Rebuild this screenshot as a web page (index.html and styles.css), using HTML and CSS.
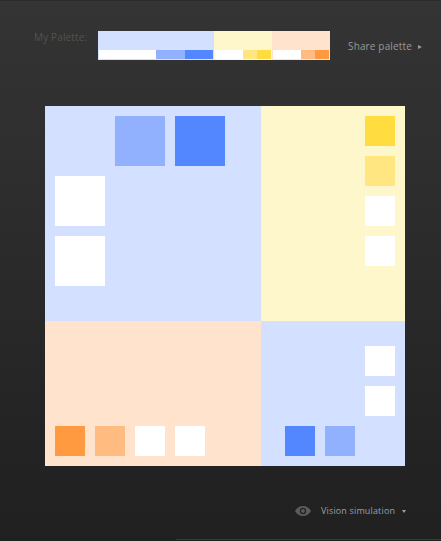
FILE: index.html
```html
<!DOCTYPE html>
<html lang="en">
<head>
    <meta charset="UTF-8">
    <meta name="viewport" content="width=device-width, initial-scale=1.0">
    <title>My Palette</title>
    <link rel="stylesheet" href="styles.css">
</head>
<body>

    <div class="app">
        <header class="top">
            <span class="palette-label">My Palette:</span>
            <div class="palette">
                <div class="swatch swatch-blue">
                    <div class="tones">
                        <i class="tone t-white t-half"></i>
                        <i class="tone t-blue-mid"></i>
                        <i class="tone t-blue"></i>
                    </div>
                </div>
                <div class="swatch swatch-yellow">
                    <div class="tones">
                        <i class="tone t-white t-half"></i>
                        <i class="tone t-yellow-mid"></i>
                        <i class="tone t-yellow"></i>
                    </div>
                </div>
                <div class="swatch swatch-orange">
                    <div class="tones">
                        <i class="tone t-white t-half"></i>
                        <i class="tone t-orange-mid"></i>
                        <i class="tone t-orange"></i>
                    </div>
                </div>
            </div>
            <a class="share">Share palette <span class="arrow arrow-right"></span></a>
        </header>

        <!-- Preview board -->
        <main class="board">
            <section class="area area-tl">
                <i class="sq big t-blue-mid c2 r1"></i>
                <i class="sq big t-blue c3 r1"></i>
                <i class="sq big t-white c1 r2"></i>
                <i class="sq big t-white c1 r3"></i>
            </section>
            <section class="area area-tr">
                <i class="sq t-yellow"></i>
                <i class="sq t-yellow-mid"></i>
                <i class="sq t-white"></i>
                <i class="sq t-white"></i>
            </section>
            <section class="area area-bl">
                <i class="sq t-orange"></i>
                <i class="sq t-orange-mid"></i>
                <i class="sq t-white"></i>
                <i class="sq t-white"></i>
            </section>
            <section class="area area-br">
                <i class="sq t-white c3 r1"></i>
                <i class="sq t-white c3 r2"></i>
                <i class="sq t-blue c1 r3"></i>
                <i class="sq t-blue-mid c2 r3"></i>
            </section>
        </main>

        <footer class="bottom">
            <svg class="eye" width="16" height="10" viewBox="0 0 16 10">
                <path fill-rule="evenodd" fill="#5c5c5c" d="M0 5C2 1.8 4.8 0 8 0S14 1.8 16 5C14 8.2 11.2 10 8 10S2 8.2 0 5ZM8 1.8A3.2 3.2 0 1 0 8 8.2A3.2 3.2 0 1 0 8 1.8Z"/>
                <circle cx="8" cy="5" r="1.9" fill="#5c5c5c"/>
            </svg>
            <a class="vision">Vision simulation <span class="arrow arrow-down"></span></a>
        </footer>
        <div class="edge"></div>
    </div>

</body>
</html>
```

FILE: styles.css
```css
* {
    box-sizing: border-box;
}

body {
    margin: 0;
    font-family: "Open Sans", sans-serif;
    background-color: #2a2a2a;
}

.app {
    width: 441px;
    height: 541px;
    background: linear-gradient(#343434, #202020);
    border-top: 1px solid #2c2c2c;
    display: flex;
    flex-direction: column;
}

/* Barra de cima */
.top {
    height: 105px;
    padding: 29px 0 0 34px;
    display: flex;
    align-items: flex-start;
}

.palette-label {
    width: 64px;
    font-size: 10px;
    line-height: 14px;
    letter-spacing: 0.15px;
    color: #525252;
}

.palette {
    width: 232px;
    height: 29px;
    margin-top: 1px;
    display: flex;
}

.swatch {
    display: flex;
    align-items: flex-end;
    padding: 1px;
}

.swatch-blue {
    width: 116px;
    background: #d3e0ff;
}

.swatch-yellow {
    width: 58px;
    background: #fff7cc;
}

.swatch-orange {
    width: 58px;
    background: #ffe3cc;
}

.tones {
    width: 100%;
    height: 9px;
    display: flex;
}

.tone {
    flex: 1;
}

.tone.t-half {
    flex: 2;
}

.share {
    margin: 9px 0 0 18px;
    font-size: 10px;
    line-height: 14px;
    letter-spacing: 0.15px;
    color: #989898;
    white-space: nowrap;
}

.arrow {
    display: inline-block;
    vertical-align: middle;
}

.arrow-right {
    margin-left: 3px;
    border-left: 4px solid #989898;
    border-top: 2px solid transparent;
    border-bottom: 2px solid transparent;
}

.arrow-down {
    margin-left: 4px;
    border-top: 3px solid #a0a0a0;
    border-left: 2px solid transparent;
    border-right: 2px solid transparent;
}

/* Quadro */
.board {
    width: 360px;
    height: 360px;
    margin-left: 45px;
    display: grid;
    grid-template-columns: 216px 144px;
    grid-template-rows: 215px 145px;
}

.area {
    padding: 10px;
}

.area-tl {
    background: #d3e0ff;
    display: grid;
    grid-template-columns: repeat(3, 50px);
    grid-template-rows: repeat(3, 50px);
    gap: 10px;
}

.area-tr {
    background: #fff7cc;
    display: flex;
    flex-direction: column;
    align-items: flex-end;
    gap: 10px;
}

.area-bl {
    background: #ffe3cc;
    display: flex;
    align-items: flex-end;
    gap: 10px;
}

.area-br {
    background: #d3e0ff;
    display: grid;
    grid-template-columns: repeat(3, 30px);
    grid-template-rows: repeat(3, 30px);
    gap: 10px;
    justify-content: end;
    align-content: end;
}

.sq {
    display: block;
    width: 30px;
    height: 30px;
}

.sq.big {
    width: 50px;
    height: 50px;
}

.c1 { grid-column: 1; }
.c2 { grid-column: 2; }
.c3 { grid-column: 3; }
.r1 { grid-row: 1; }
.r2 { grid-row: 2; }
.r3 { grid-row: 3; }

.t-white { background: #fff; }
.t-blue { background: #5387ff; }
.t-blue-mid { background: #91b1ff; }
.t-yellow { background: #ffdd40; }
.t-yellow-mid { background: #ffe680; }
.t-orange { background: #ff9a40; }
.t-orange-mid { background: #ffbb80; }

/* Rodape */
.bottom {
    flex: 1;
    padding: 39px 0 0 295px;
    display: flex;
    align-items: flex-start;
}

.eye {
    margin: 1px 10px 0 0;
}

.vision {
    font-size: 9px;
    line-height: 12px;
    letter-spacing: 0.15px;
    color: #94a0ac;
    white-space: nowrap;
}

.edge {
    height: 1px;
    margin: 0 0 1px 176px;
    background: #3a3a3a;
}
```
